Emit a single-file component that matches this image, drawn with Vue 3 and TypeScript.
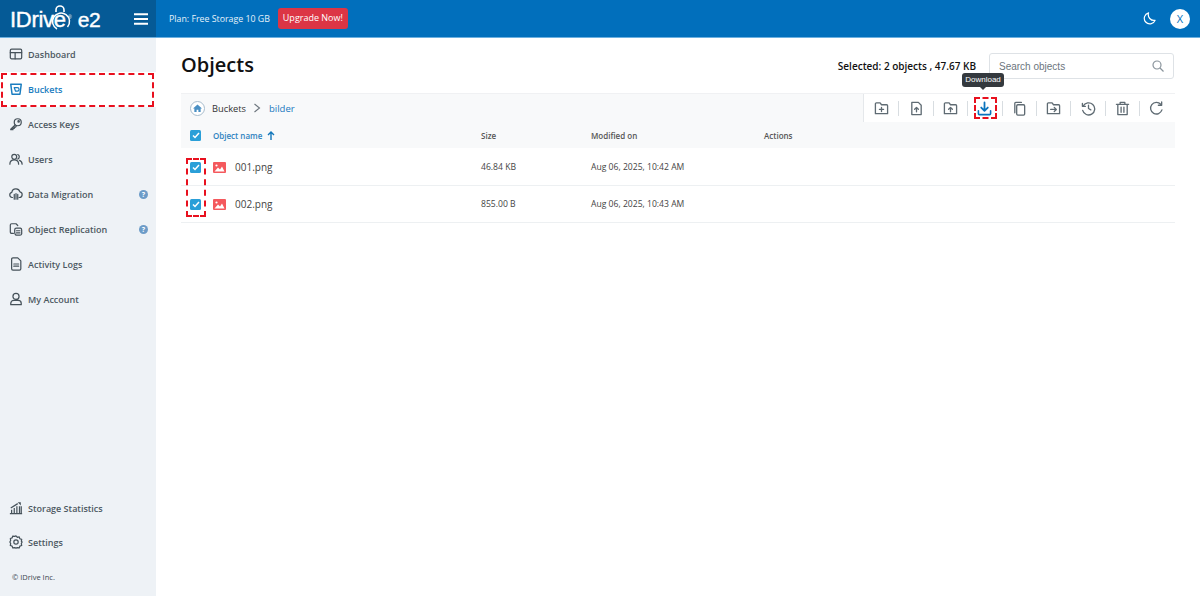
<script setup lang="ts">
interface NavItem { label: string; icon: string; help?: boolean; active?: boolean }
const nav: NavItem[] = [
  { label: 'Dashboard', icon: 'dash' },
  { label: 'Buckets', icon: 'bucket', active: true },
  { label: 'Access Keys', icon: 'key' },
  { label: 'Users', icon: 'users' },
  { label: 'Data Migration', icon: 'cloud', help: true },
  { label: 'Object Replication', icon: 'repl', help: true },
  { label: 'Activity Logs', icon: 'log' },
  { label: 'My Account', icon: 'user' },
]
const files = [
  { name: '001.png', size: '46.84 KB', date: 'Aug 06, 2025, 10:42 AM' },
  { name: '002.png', size: '855.00 B', date: 'Aug 06, 2025, 10:43 AM' },
]
const tools = ['newfolder', 'upfile', 'upfolder', 'download', 'copy', 'move', 'history', 'trash', 'refresh']
</script>

<template>
  <div class="app">
    <header class="top">
      <div class="brand">
        <div class="logo">
          <span class="logo-text">IDriv</span>
          <span class="logo-e">e<svg class="lock" viewBox="0 0 22 28" width="22" height="28"><path d="M7 8V6a4 4 0 0 1 8 0v2" fill="none" stroke="#fff" stroke-width="1.600"/><path d="M18.500 23A8.500 8.500 0 1 0 8 25" fill="none" stroke="#fff" stroke-width="1.500"/></svg></span>
          <span class="reg">®</span>
          <span class="logo-e2">e2</span>
        </div>
        <svg class="burger" width="14" height="12" viewBox="0 0 14 12"><path d="M0 1.200h14M0 6h14M0 10.800h14" stroke="#fff" stroke-width="2"/></svg>
      </div>
      <div class="bar">
        <span class="plan">Plan: Free Storage 10 GB</span>
        <span class="upgrade">Upgrade Now!</span>
        <svg class="moon" width="13" height="13" viewBox="0 0 14 14"><path d="M6 1a6 6 0 1 0 7 8A6.200 6.200 0 0 1 6 1z" fill="none" stroke="#fff" stroke-width="1.300" stroke-linejoin="round"/></svg>
        <span class="avatar">X</span>
      </div>
    </header>

    <div class="body">
      <aside class="side">
        <nav class="nav">
          <a v-for="n in nav" :key="n.label" class="item" :class="{ active: n.active }">
            <svg class="ico" width="14" height="14" viewBox="0 0 16 16" fill="none" stroke="currentColor" stroke-width="1.400" stroke-linejoin="round" stroke-linecap="round">
              <template v-if="n.icon === 'dash'"><rect x="1.500" y="2.500" width="13" height="11" rx="1.500"/><path d="M1.500 6.500h13M7 6.500v7"/></template>
              <template v-else-if="n.icon === 'bucket'"><path d="M2 2.500h12l-1.500 11.500h-9z" stroke-width="1.700"/><path d="M6 6.500h3.500a2 2 0 0 1 0 4H7.500z" stroke-width="1.400"/></template>
              <template v-else-if="n.icon === 'key'"><circle cx="10" cy="6" r="4"/><circle cx="11" cy="5" r=".8"/><path d="M7 9l-5 5v.5h2.500V13H6v-1.500h1.500L8.500 10"/></template>
              <template v-else-if="n.icon === 'users'"><circle cx="6" cy="5.500" r="2.800"/><path d="M1 14c0-3 2.200-5 5-5s5 2 5 5"/><path d="M10 2.900a2.800 2.800 0 0 1 0 5.200M12 9.500c1.800.6 3 2.300 3 4.500"/></template>
              <template v-else-if="n.icon === 'cloud'"><path d="M4 12H3.500a3 3 0 0 1-.3-5.900A4.800 4.800 0 0 1 12.500 5.500 3.300 3.300 0 0 1 12 12h-.5"/><path d="M6 8.500V14M8 7.500V14M10 8.500V14"/></template>
              <template v-else-if="n.icon === 'repl'"><path d="M5 13H3a1.500 1.500 0 0 1-1.500-1.500v-8A1.500 1.500 0 0 1 3 2h5l2 2"/><path d="M8 15a3.500 3.500 0 0 1-1.500-3V9a2 2 0 0 1 2-2h4.500a2 2 0 0 1 1.500 2v4.500a2 2 0 0 1-2 1.500z"/><path d="M8.500 10h4M8.500 12.500h4"/></template>
              <template v-else-if="n.icon === 'log'"><path d="M3 2.500A1.500 1.500 0 0 1 4.500 1H10l3.500 3.500v9A1.500 1.500 0 0 1 12 15H4.500A1.500 1.500 0 0 1 3 13.500z"/><path d="M5.500 8h5.500M5.500 10.500h5.500"/></template>
              <template v-else><circle cx="8" cy="5" r="3.500"/><path d="M2 14.500v-1.500a3.500 3.500 0 0 1 3.500-3.500h5a3.500 3.500 0 0 1 3.500 3.500v1.500z"/></template>
            </svg>
            <span class="lbl">{{ n.label }}</span>
            <span v-if="n.help" class="help">?</span>
          </a>
        </nav>
        <div class="side-foot">
          <a class="item">
            <svg class="ico" width="14" height="14" viewBox="0 0 16 16" fill="none" stroke="currentColor" stroke-width="1.400"><path d="M1 14.500h14M3 14V10M6 14V8M9 14V6M12 14V6M14 14V6" /><path d="M2 8l8-5" /><path d="M10 1.500h3.500V5z" fill="currentColor" stroke="none"/></svg>
            <span class="lbl">Storage Statistics</span>
          </a>
          <a class="item">
            <svg class="ico" width="14" height="14" viewBox="0 0 16 16" fill="none" stroke="currentColor" stroke-width="1.400"><path d="M8 1l1.500 1.600 2.200-.4.700 2.100 2.100.7-.4 2.200L15 8l-.9 1.800.4 2.200-2.100.7-.7 2.100-2.200-.4L8 15l-1.500-.6-2.200.4-.7-2.100-2.100-.7.4-2.200L1 8l.9-1.800-.4-2.200 2.100-.7.7-2.100 2.200.4z" stroke-linejoin="round"/><circle cx="8" cy="8" r="2.500"/></svg>
            <span class="lbl">Settings</span>
          </a>
          <div class="copy">© IDrive Inc.</div>
        </div>
      </aside>

      <main class="main">
        <div class="head">
          <h1>Objects</h1>
          <div class="head-right">
            <span class="selected">Selected: 2 objects , 47.67 KB</span>
            <div class="search">
              <span>Search objects</span>
              <svg width="12" height="12" viewBox="0 0 12 12" fill="none" stroke="#8a949c" stroke-width="1.200"><circle cx="5" cy="5" r="4"/><path d="M8 8l3.500 3.500"/></svg>
            </div>
          </div>
        </div>

        <div class="toolbar">
          <div class="crumbs">
            <span class="home"><svg width="9" height="9" viewBox="0 0 10 10"><path d="M5 .5L10 5H8.500v4H6V6.500H4V9H1.500V5H0z" fill="#4a90c4"/></svg></span>
            <span class="c1">Buckets</span>
            <svg width="8" height="10" viewBox="0 0 8 10" fill="none" stroke="#6c757d" stroke-width="1.100"><path d="M1.500 1l5 4-5 4"/></svg>
            <span class="c2">bilder</span>
          </div>
          <div class="tools">
            <div v-for="t in tools" :key="t" class="tool" :class="{ on: t === 'download' }">
              <svg width="15" height="15" viewBox="0 0 16 16" fill="none" stroke="currentColor" stroke-width="1.400" stroke-linejoin="round" stroke-linecap="round">
                <template v-if="t === 'newfolder'"><path d="M1.500 13.500V3a1 1 0 0 1 1-1h4l1.500 2h5.500a1 1 0 0 1 1 1v8.500z"/><path d="M8 6.800v4.400M5.800 9h4.400"/></template>
                <template v-else-if="t === 'upfile'"><path d="M3 14.500V1.500h7l3 3v10z"/><path d="M8 11.500V7M6 8.800L8 6.800l2 2"/></template>
                <template v-else-if="t === 'upfolder'"><path d="M1.500 13.500V3a1 1 0 0 1 1-1h4l1.500 2h5.500a1 1 0 0 1 1 1v8.500z"/><path d="M8 11.500V7M6 8.800L8 6.800l2 2"/></template>
                <template v-else-if="t === 'download'"><path d="M8 1.500v8.500M4.500 7L8 10.500 11.500 7" stroke-width="1.900"/><path d="M1.500 10.500v3a1 1 0 0 0 1 1h11a1 1 0 0 0 1-1v-3" stroke-width="1.700"/></template>
                <template v-else-if="t === 'copy'"><rect x="5" y="4" width="8.500" height="11" rx="1.200"/><path d="M3 12.500V2.500a1 1 0 0 1 1-1h6"/></template>
                <template v-else-if="t === 'move'"><path d="M1.500 13.500V3a1 1 0 0 1 1-1h4l1.500 2h5.500a1 1 0 0 1 1 1v8.500z"/><path d="M5 9h6M8.800 6.800L11 9l-2.200 2.200"/></template>
                <template v-else-if="t === 'history'"><path d="M2.300 5.500A6.500 6.500 0 1 1 1.800 10"/><path d="M1.500 2.500v3.200h3.200M8 4.500V8l2.500 1.500"/></template>
                <template v-else-if="t === 'trash'"><path d="M3 3.500h10v11H3zM1.500 3.500h13M5.500 3.500V1.500h5v2M6.500 6.500v5.500M9.500 6.500v5.500"/></template>
                <template v-else><path d="M13.800 9.500A6.200 6.200 0 1 1 12.500 3.500"/><path d="M13.500 1v3.500H10"/></template>
              </svg>
            </div>
          </div>
        </div>

        <div class="row thead">
          <span class="c-check"><span class="check"><svg width="8" height="7" viewBox="0 0 8 7" fill="none" stroke="#fff" stroke-width="1.500"><path d="M1 3.500l2 2 4-4.500"/></svg></span></span>
          <span class="c-name name-h">Object name <svg width="8" height="9" viewBox="0 0 8 9" fill="none" stroke="#1276ba" stroke-width="1.400"><path d="M4 9V1M1 4l3-3 3 3"/></svg></span>
          <span class="c-size">Size</span>
          <span class="c-date">Modified on</span>
          <span class="c-act">Actions</span>
        </div>
        <div v-for="f in files" :key="f.name" class="row tr">
          <span class="c-check"><span class="check"><svg width="8" height="7" viewBox="0 0 8 7" fill="none" stroke="#fff" stroke-width="1.500"><path d="M1 3.500l2 2 4-4.500"/></svg></span></span>
          <span class="c-name file">
            <svg width="13" height="11" viewBox="0 0 13 11"><rect width="13" height="11" rx="1" fill="#f4595d"/><circle cx="3.500" cy="3.500" r="1.100" fill="#fff"/><path d="M1.500 9.500L5 5.500l2 2 2-3 2.500 5z" fill="#fff"/></svg>
            <span>{{ f.name }}</span>
          </span>
          <span class="c-size">{{ f.size }}</span>
          <span class="c-date">{{ f.date }}</span>
          <span class="c-act"></span>
        </div>
      </main>
    </div>

    <div class="mark m-bucket"></div>
    <div class="mark m-check"></div>
    <div class="mark m-dl"></div>
    <div class="tip">Download</div>
  </div>
</template>

<style>
html, body { margin: 0; background: #fff; }
</style>

<style scoped>
.app { position: relative; width: 1200px; height: 596px; overflow: hidden; font-family: "Open Sans", sans-serif; color: #212529; }
.top { display: flex; height: 37px; border-bottom: 1px solid #6cb0e0; box-sizing: content-box; }
.brand { width: 156px; background: #055a96; display: flex; align-items: center; justify-content: space-between; padding: 0 8px 0 10px; box-sizing: border-box; }
.logo { display: flex; align-items: baseline; color: #fff; font-family: "Liberation Sans", sans-serif; position: relative; top: 1px; -webkit-text-stroke: .4px #fff; }
.logo-text { font-size: 22px; letter-spacing: -.3px; }
.logo-e { font-size: 22px; position: relative; }
.lock { position: absolute; left: -5px; top: -3px; }
.reg { font-size: 5px; align-self: flex-start; margin: 7px 5px 0 2px; -webkit-text-stroke: 0; }
.logo-e2 { font-size: 21px; letter-spacing: -.3px; margin-left: 1px; }
.burger { flex: none; }
.bar { flex: 1; background: #016fbc; display: flex; align-items: center; padding: 0 10px 0 13px; color: #fff; }
.plan { font-size: 8.800px; color: #e6f2fa; }
.upgrade { margin-left: 8px; background: #dc3545; color: #fff; font-size: 9px; font-weight: 500; height: 21px; line-height: 20px; width: 70px; text-align: center; border-radius: 3px; }
.moon { margin-left: auto; margin-right: 14px; }
.avatar { width: 20px; height: 20px; border-radius: 50%; background: #fff; color: #016fbc; font-size: 11px; display: flex; align-items: center; justify-content: center; }
.body { display: flex; height: 558px; }
.side { width: 156px; background: #eef2f6; display: flex; flex-direction: column; justify-content: space-between; }
.nav { display: flex; flex-direction: column; }
.item { height: 35px; display: flex; align-items: center; gap: 5px; padding: 0 8px 0 9px; color: #4c5861; font-size: 9px; font-weight: 600; box-sizing: border-box; position: relative; top: -1.500px; }
.item.active { background: #fff; color: #1a7dc0; }
.ico { flex: none; color: #46525a; }
.item.active .ico { color: #1a7dc0; }
.lbl { flex: 1; white-space: nowrap; }
.help { width: 9px; height: 9px; border-radius: 50%; background: #6d9cc8; color: #fff; font-size: 7px; font-weight: 700; line-height: 9px; text-align: center; }
.side-foot { display: flex; flex-direction: column; }
.side-foot .item { height: 34px; top: 0; }
.copy { font-size: 7.500px; color: #3c4650; padding: 13px 12px 13px; line-height: 11px; }
.main { flex: 1; padding: 0 25px; min-width: 0; }
.head { height: 55px; display: flex; align-items: center; justify-content: space-between; }
h1 { margin: 0; font-size: 20px; font-weight: 600; line-height: 27px; color: #111; margin-top: -3px; }
.head-right { display: flex; align-items: center; gap: 13px; margin: 1px 1px 0 0; }
.selected { font-size: 10px; font-weight: 600; color: #111; }
.search { width: 185px; height: 26px; box-sizing: border-box; border: 1px solid #dee2e6; border-radius: 3px; display: flex; align-items: center; justify-content: space-between; padding: 0 9px; font-family: "Liberation Sans", sans-serif; font-size: 10px; color: #6c757d; }
.toolbar { height: 29px; background: #f8f9fa; border-top: 1px solid #f0f1f3; box-sizing: border-box; display: flex; align-items: center; justify-content: space-between; }
.crumbs { display: flex; align-items: center; padding-left: 9px; font-size: 9.300px; }
.home { width: 13px; height: 13px; border: 1px solid #a7bccd; border-radius: 50%; display: flex; align-items: center; justify-content: center; background: #fff; margin-right: 7px; }
.c1 { color: #333; margin-right: 7px; }
.c2 { color: #1878c0; margin-left: 8px; font-size: 9.500px; }
.tools { display: flex; align-items: center; background: #fff; height: 100%; padding-right: 1.500px; border-left: 1px solid #e5e8eb; }
.tool { width: 34.400px; height: 15px; display: flex; align-items: center; justify-content: center; color: #5f6b73; border-left: 1px solid #d8dde1; box-sizing: border-box; }
.tool:first-child { border-left: 0; }
.tool.on { color: #0a74bd; }
.row { display: flex; align-items: center; }
.thead { height: 26px; background: #f8f9fa; font-size: 8px; font-weight: 600; color: #555; }
.tr { height: 37px; border-bottom: 1px solid #edf0f2; font-size: 8.600px; box-sizing: border-box; color: #444; }
.thead + .tr { margin-top: 1px; }
.c-check { width: 32px; padding-left: 9px; box-sizing: border-box; display: flex; }
.check { width: 11px; height: 11px; background: #2a9fd8; border-radius: 1.500px; display: flex; align-items: center; justify-content: center; }
.c-name { width: 268px; }
.name-h { color: #2f83c0; display: flex; align-items: center; gap: 5px; }
.file { display: flex; align-items: center; gap: 9px; font-size: 10px; color: #444; }
.c-size { width: 110px; }
.c-date { width: 173px; }
.mark { position: absolute; border: 2px dashed #e8101e; box-sizing: border-box; }
.m-bucket { left: 1px; top: 73px; width: 153px; height: 34px; }
.m-check { left: 186px; top: 158px; width: 20px; height: 59px; }
.m-dl { left: 974px; top: 97px; width: 23px; height: 22px; }
.tip { position: absolute; left: 962px; top: 73px; width: 42px; height: 14px; background: #34393e; color: #fff; border-radius: 3px; font-size: 8px; font-family: "Liberation Sans", sans-serif; line-height: 14px; text-align: center; }
.tip::after { content: ""; position: absolute; left: 18px; top: 14px; border: 3px solid transparent; border-top-color: #34393e; }
</style>
